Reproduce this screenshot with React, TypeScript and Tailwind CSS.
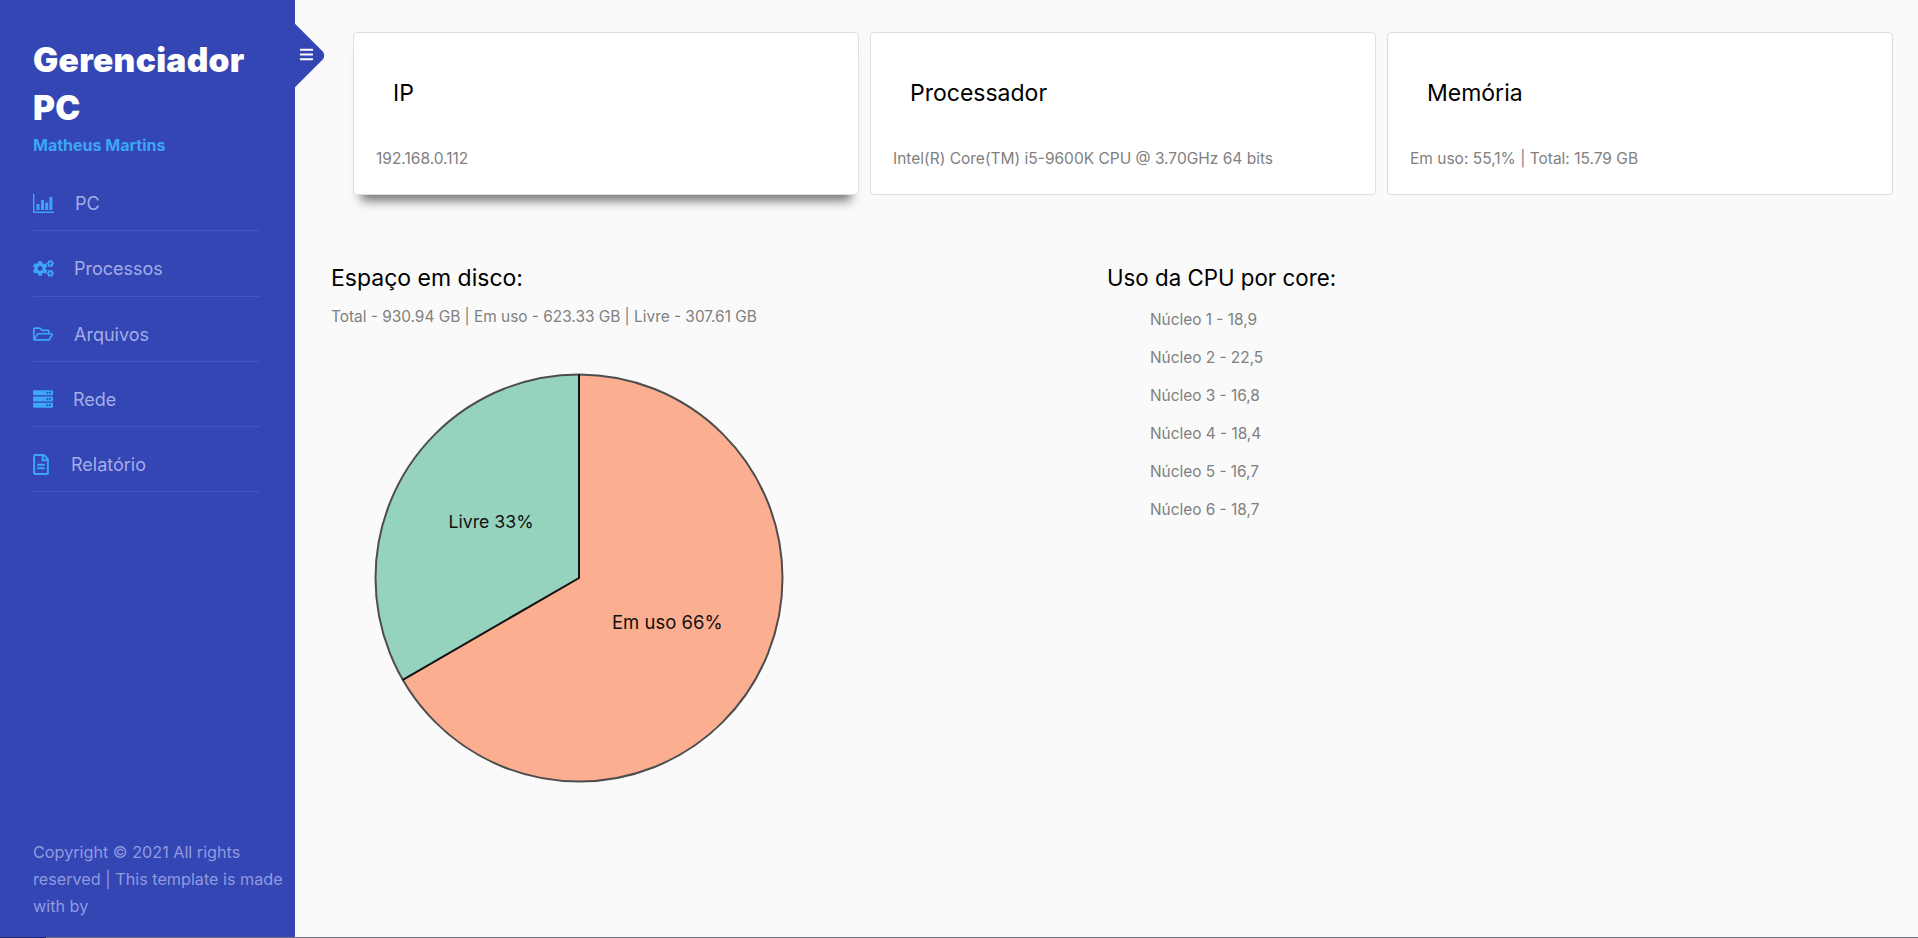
import { FaBars, FaCogs, FaRegFolderOpen, FaServer, FaRegFileAlt } from "react-icons/fa";

const ChartIcon = () => (
  <svg viewBox="0 0 21 19" className="w-[21px] h-[19px]" fill="currentColor">
    <path d="M0 0h1.4v17.5H21V19H0z" />
    <path d="M3.5 10h3v6h-3zM8 6h3v10H8zM12.2 8.5h3V16h-3zM16.4 3h3v13h-3z" />
  </svg>
);

const menu = [
  { label: "PC", icon: <ChartIcon />, gap: "ml-[21px]" },
  { label: "Processos", icon: <FaCogs className="w-[21px] h-[21px]" />, gap: "ml-[20px]" },
  { label: "Arquivos", icon: <FaRegFolderOpen className="w-[20px] h-[20px]" />, gap: "ml-[20px]" },
  { label: "Rede", icon: <FaServer className="w-[20px] h-[20px]" />, gap: "ml-[19px]" },
  { label: "Relatório", icon: <FaRegFileAlt className="w-[16px] h-[21px]" />, gap: "ml-[17px]" },
];

const cards = [
  { title: "IP", text: "192.168.0.112", shadow: true },
  { title: "Processador", text: "Intel(R) Core(TM) i5-9600K CPU @ 3.70GHz 64 bits", shadow: false },
  { title: "Memória", text: "Em uso: 55,1% | Total: 15.79 GB", shadow: false },
];

const cores = ["Núcleo 1 - 18,9", "Núcleo 2 - 22,5", "Núcleo 3 - 16,8", "Núcleo 4 - 18,4", "Núcleo 5 - 16,7", "Núcleo 6 - 18,7"];

const PieChart = () => (
  <svg viewBox="0 0 412 412" className="w-[412px] h-[412px]">
    <path d="M206 206 L206 2.5 A203.5 203.5 0 1 1 29.8 307.8 Z" fill="#fcae91" />
    <path d="M206 206 L29.8 307.8 A203.5 203.5 0 0 1 206 2.5 Z" fill="#96d3bf" />
    <circle cx="206" cy="206" r="203.5" fill="none" stroke="#4d4d4d" strokeWidth="2" />
    <path d="M206 2.5 V206 L29.8 307.8" fill="none" stroke="#111" strokeWidth="2" />
    <text x="118" y="156" textAnchor="middle" fontSize="17.7" fill="#111">Livre 33%</text>
    <text x="239" y="257" fontSize="18.5" fill="#111">Em uso 66%</text>
  </svg>
);

export default function App() {
  return (
    <div className="flex flex-col h-[938px] overflow-hidden bg-[#fafafa] font-['Inter','Liberation_Sans',sans-serif]">
      <div className="flex flex-1 min-h-0">
        <aside className="relative w-[295px] shrink-0 bg-[#3445b4] pl-[33px] flex flex-col">
          <div className="absolute left-[270px] top-[32px] w-[47px] h-[47px] rotate-45 rounded-tr-[6px] bg-[#3445b4]" />
          <FaBars className="absolute left-[299px] top-[47px] w-[15px] h-[15px] text-white" />

          <h1 className="mt-[36px] text-[33.5px] leading-[48px] font-black tracking-[0.3px] text-white w-[230px]">Gerenciador PC</h1>
          <p className="mt-[1px] text-[16px] leading-[24px] font-bold text-[#3ca6f5]">Matheus Martins</p>

          <nav className="mt-[9px] w-[227px]">
            {menu.map((item) => (
              <div key={item.label} className="flex items-center h-[65.25px] pt-[11px] border-b border-[#4656bf]">
                <span className="text-[#3ca6f5] w-[21px] flex justify-start">{item.icon}</span>
                <span className={`${item.gap} text-[18px] text-[#a3ade8]`}>{item.label}</span>
              </div>
            ))}
          </nav>

          <p className="mt-auto mb-[17px] text-[16.2px] leading-[27px] text-[#8f9ae0]">
            Copyright © 2021 All rights reserved | This template is made with by
          </p>
        </aside>

        <main className="flex-1 pt-[32px] pr-[25px]">
          <div className="grid grid-cols-3 gap-[11px] pl-[58px]">
            {cards.map((card) => (
              <div
                key={card.title}
                className={`h-[163px] rounded-[4px] border border-[#dfdfdf] bg-white px-[22px] ${card.shadow ? "shadow-[0_14px_10px_-8px_#777]" : ""}`}
              >
                <h2 className="mt-[45px] pl-[17px] text-[23px] leading-[30px] text-black">{card.title}</h2>
                <p className="mt-[39px] text-[15.5px] leading-[24px] text-[#808080]">{card.text}</p>
              </div>
            ))}
          </div>

          <div className="flex pl-[36px] mt-[67px]">
            <section className="w-[776px]">
              <h3 className="text-[23px] leading-[32px] text-black">Espaço em disco:</h3>
              <p className="mt-[11px] text-[15.4px] leading-[24px] text-[#808080]">Total - 930.94 GB | Em uso - 623.33 GB | Livre - 307.61 GB</p>
              <div className="mt-[43px] ml-[42px]">
                <PieChart />
              </div>
            </section>
            <section>
              <h3 className="text-[22.3px] leading-[32px] text-black">Uso da CPU por core:</h3>
              <ul className="mt-[13px] pl-[43px]">
                {cores.map((core) => (
                  <li key={core} className="h-[38px] text-[15.4px] leading-[26px] text-[#808080]">{core}</li>
                ))}
              </ul>
            </section>
          </div>
        </main>
      </div>
      <div className="flex h-px shrink-0 bg-[#6f7180]">
        <div className="w-[46px] bg-[#1a2570]" />
      </div>
    </div>
  );
}
